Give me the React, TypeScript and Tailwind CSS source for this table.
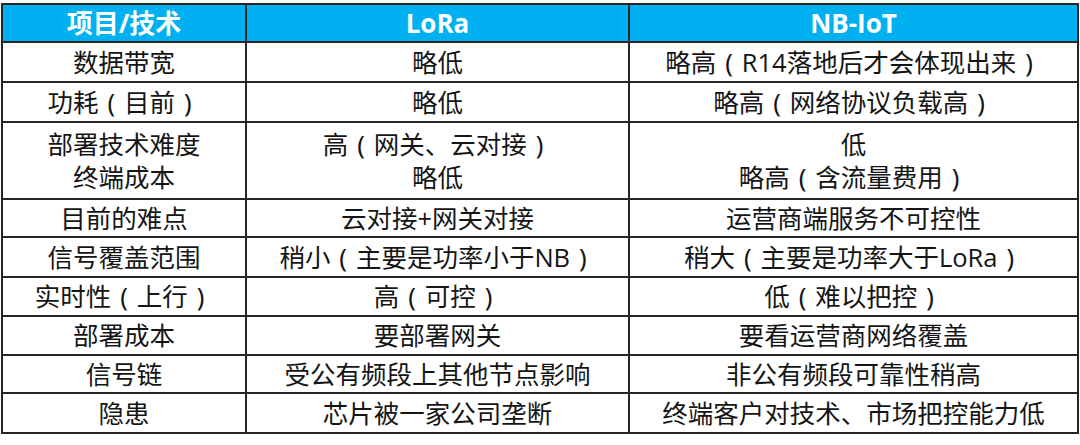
import React from "react";

const rows: { h: string; cells: [string[], string[], string[]] }[] = [
  { h: "h-[40px]", cells: [["数据带宽"], ["略低"], ["略高（R14落地后才会体现出来）"]] },
  { h: "h-[40px]", cells: [["功耗（目前）"], ["略低"], ["略高（网络协议负载高）"]] },
  { h: "h-[77px]", cells: [["部署技术难度", "终端成本"], ["高（网关、云对接）", "略低"], ["低", "略高（含流量费用）"]] },
  { h: "h-[38px]", cells: [["目前的难点"], ["云对接+网关对接"], ["运营商端服务不可控性"]] },
  { h: "h-[40px]", cells: [["信号覆盖范围"], ["稍小（主要是功率小于NB）"], ["稍大（主要是功率大于LoRa）"]] },
  { h: "h-[39px]", cells: [["实时性（上行）"], ["高（可控）"], ["低（难以把控）"]] },
  { h: "h-[39px]", cells: [["部署成本"], ["要部署网关"], ["要看运营商网络覆盖"]] },
  { h: "h-[38px]", cells: [["信号链"], ["受公有频段上其他节点影响"], ["非公有频段可靠性稍高"]] },
  { h: "h-[40px]", cells: [["隐患"], ["芯片被一家公司垄断"], ["终端客户对技术、市场把控能力低"]] },
];

function Line({ text }: { text: string }) {
  const parts = text.split(/([（）])/);
  return (
    <div>
      {parts.map((p, i) =>
        p === "（" || p === "）" ? (
          <span key={i} className="inline-block w-[1em] text-center" style={{ fontFamily: '"Noto Sans", sans-serif' }}>
            {p === "（" ? "(" : ")"}
          </span>
        ) : (
          <span key={i}>{p}</span>
        )
      )}
    </div>
  );
}

export default function App() {
  return (
    <div className="w-[1080px] h-[445px] bg-white pt-[3px] pl-[1px]" style={{ fontFamily: '"Open Sans", "Noto Sans CJK SC", sans-serif' }}>
      <table className="border-collapse table-fixed w-[1076px] text-[#151515]">
        <colgroup>
          <col className="w-[244px]" />
          <col className="w-[383px]" />
          <col className="w-[449px]" />
        </colgroup>
        <thead>
          <tr className="h-[38px] bg-[#00b0f0] text-white font-bold text-[26px]">
            <th className="border-2 border-[#262626] p-0 leading-none">项目/技术</th>
            <th className="border-2 border-[#262626] p-0 leading-none">LoRa</th>
            <th className="border-2 border-[#262626] p-0 leading-none">NB-IoT</th>
          </tr>
        </thead>
        <tbody>
          {rows.map((r, i) => (
            <tr key={i} className={r.h}>
              {r.cells.map((c, j) => (
                <td key={j} className="border-2 border-[#262626] p-0 text-center text-[25.5px] leading-[33px] whitespace-nowrap">
                  {c.map((l, k) => (
                    <Line key={k} text={l} />
                  ))}
                </td>
              ))}
            </tr>
          ))}
        </tbody>
      </table>
    </div>
  );
}
